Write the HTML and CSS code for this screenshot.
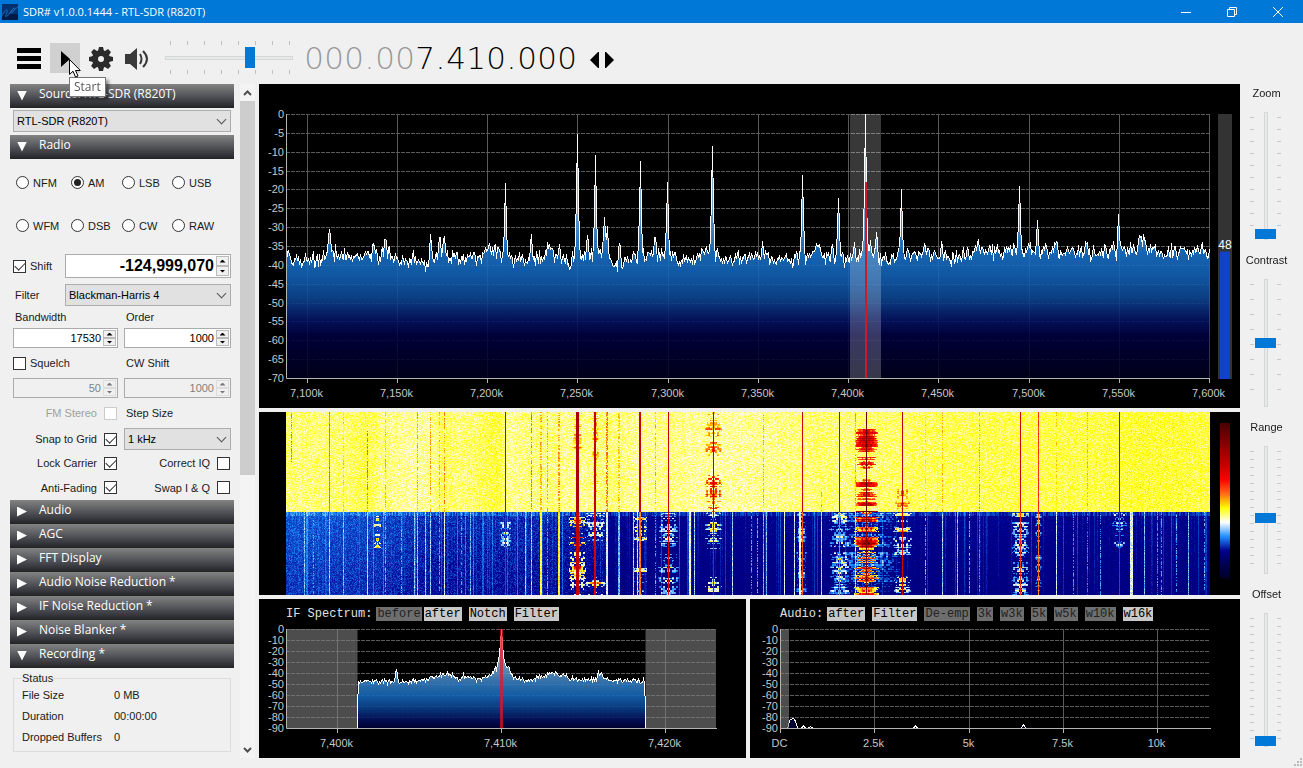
FILE: index.html
```
<!DOCTYPE html>
<html lang="en">
<head>
    <meta charset="UTF-8">
    <meta name="viewport" content="width=device-width, initial-scale=1.0">
    <title>SDR# v1.0.0.1444 - RTL-SDR (R820T)</title>
    <link rel="stylesheet" href="styles.css">
</head>
<body>
    <header class="titlebar">
        <svg class="app-icon" viewBox="0 0 16 16">
            <rect width="16" height="16" fill="#04306e"/>
            <rect y="10" width="16" height="6" fill="#021a48"/>
            <path d="M0,12 C3,5 6,4 5,8 S2,13 5,12 S9,5 12,4 S11,9 9,9 S12,6 16,3" fill="none" stroke="#1c6cb8"/>
        </svg>
        <h1>SDR# v1.0.0.1444 - RTL-SDR (R820T)</h1>
        <div class="window-buttons">
            <button aria-label="Minimize"><svg viewBox="0 0 12 12"><path d="M1,6.5 H11"/></svg></button>
            <button aria-label="Restore"><svg viewBox="0 0 12 12"><path d="M1.5,3.5 H8.5 V10.5 H1.5 Z M3.5,3.5 V1.5 H10.5 V8.5 H8.5"/></svg></button>
            <button aria-label="Close"><svg viewBox="0 0 12 12"><path d="M1,1 L11,11 M11,1 L1,11"/></svg></button>
        </div>
    </header>

    <div class="toolbar">
        <button class="tool" aria-label="Menu">
            <svg viewBox="0 0 30 30"><path d="M3,5 h24 v5 h-24 z M3,13 h24 v5 h-24 z M3,21 h24 v5 h-24 z" fill="#000"/></svg>
        </button>
        <div class="play-wrap">
            <button class="tool active" aria-label="Start">
                <svg viewBox="0 0 30 30"><path d="M11,8 L20,16 L11,24 Z" fill="#000"/></svg>
            </button>
            <svg class="cursor" viewBox="0 0 12 19"><path d="M0.5,0.5 V15.5 L4,12.2 L6.5,18 L9,17 L6.5,11.5 H11.3 Z" fill="#fff" stroke="#000"/></svg>
            <span class="tooltip" role="tooltip">Start</span>
        </div>
        <button class="tool" aria-label="Configure">
            <svg viewBox="0 0 30 30">
                <g fill="#2b2b2b">
                    <circle cx="15" cy="16" r="9"/>
                    <path d="M12,8 L13,4 H17 L18,8 V24 L17,28 H13 L12,24 Z"/>
                    <path d="M12,8 L13,4 H17 L18,8 V24 L17,28 H13 L12,24 Z" transform="rotate(45 15 16)"/>
                    <path d="M12,8 L13,4 H17 L18,8 V24 L17,28 H13 L12,24 Z" transform="rotate(90 15 16)"/>
                    <path d="M12,8 L13,4 H17 L18,8 V24 L17,28 H13 L12,24 Z" transform="rotate(135 15 16)"/>
                </g>
                <circle cx="15" cy="16" r="3" fill="#f0f0f0"/>
            </svg>
        </button>
        <button class="tool" aria-label="Mute">
            <svg viewBox="0 0 30 30">
                <path d="M3,11 H8 L15,5 V27 L8,21 H3 Z" fill="#3a3a3a"/>
                <path d="M18,11 Q21,16 18,21 M21,8 Q29,16 21,24" fill="none" stroke="#3a3a3a" stroke-width="2"/>
            </svg>
        </button>
        <div class="slider-h">
            <input type="range" min="0" max="100" value="68" aria-label="Volume">
        </div>
        <div class="frequency" aria-label="Frequency">
            <span class="off">0</span><span class="off">0</span><span class="off">0</span><i class="off">.</i><span class="off">0</span><span class="off">0</span><span>7</span><i>.</i><span>4</span><span>1</span><span>0</span><i>.</i><span>0</span><span>0</span><span>0</span>
        </div>
        <button class="tune" aria-label="Tuning style">
            <svg viewBox="0 0 24 16"><path d="M0,8 L8,0 H9 V16 H8 Z M24,8 L16,0 H15 V16 H16 Z" fill="#000"/></svg>
        </button>
    </div>

    <main>
        <aside class="sidebar">
            <div class="panels">
                <section>
                    <h2 class="open">Source: RTL-SDR (R820T)</h2>
                    <div class="source">
                        <div class="select"><select aria-label="Source"><option>RTL-SDR (R820T)</option></select></div>
                    </div>
                </section>
                <section>
                    <h2 class="open">Radio</h2>
                    <form class="radio">
                        <div class="modes">
                            <label><input type="radio" name="mode">NFM</label>
                            <label><input type="radio" name="mode" checked>AM</label>
                            <label><input type="radio" name="mode">LSB</label>
                            <label><input type="radio" name="mode">USB</label>
                            <label><input type="radio" name="mode">WFM</label>
                            <label><input type="radio" name="mode">DSB</label>
                            <label><input type="radio" name="mode">CW</label>
                            <label><input type="radio" name="mode">RAW</label>
                        </div>
                        <div class="pair shift">
                            <label><input type="checkbox" checked>Shift</label>
                            <div class="spin big">
                                <input type="text" value="-124,999,070" aria-label="Shift frequency">
                                <button type="button" aria-label="Up"></button><button type="button" aria-label="Down"></button>
                            </div>
                        </div>
                        <div class="pair filter">
                            <label class="inset" for="filter">Filter</label>
                            <div class="select"><select id="filter"><option>Blackman-Harris 4</option></select></div>
                        </div>
                        <div class="settings">
                            <label class="inset" for="bandwidth">Bandwidth</label>
                            <label class="inset" for="order">Order</label>
                            <div class="spin">
                                <input type="text" id="bandwidth" value="17530">
                                <button type="button" aria-label="Up"></button><button type="button" aria-label="Down"></button>
                            </div>
                            <div class="spin">
                                <input type="text" id="order" value="1000">
                                <button type="button" aria-label="Up"></button><button type="button" aria-label="Down"></button>
                            </div>
                            <label><input type="checkbox">Squelch</label>
                            <label class="inset" for="cwshift">CW Shift</label>
                            <div class="spin disabled">
                                <input type="text" value="50" aria-label="Squelch level" disabled>
                                <button type="button" aria-label="Up" disabled></button><button type="button" aria-label="Down" disabled></button>
                            </div>
                            <div class="spin disabled">
                                <input type="text" id="cwshift" value="1000" disabled>
                                <button type="button" aria-label="Up" disabled></button><button type="button" aria-label="Down" disabled></button>
                            </div>
                            <label class="right disabled">FM Stereo<input type="checkbox" disabled></label>
                            <label class="inset" for="step">Step Size</label>
                            <label class="right">Snap to Grid<input type="checkbox" checked></label>
                            <div class="select"><select id="step"><option>1 kHz</option></select></div>
                            <label class="right">Lock Carrier<input type="checkbox" checked></label>
                            <label class="right">Correct IQ<input type="checkbox"></label>
                            <label class="right">Anti-Fading<input type="checkbox" checked></label>
                            <label class="right">Swap I &amp; Q<input type="checkbox"></label>
                        </div>
                    </form>
                </section>
                <h2>Audio</h2>
                <h2>AGC</h2>
                <h2>FFT Display</h2>
                <h2>Audio Noise Reduction *</h2>
                <h2>IF Noise Reduction *</h2>
                <h2>Noise Blanker *</h2>
                <section>
                    <h2 class="open">Recording *</h2>
                    <fieldset>
                        <legend>Status</legend>
                        <dl>
                            <dt>File Size</dt><dd>0 MB</dd>
                            <dt>Duration</dt><dd>00:00:00</dd>
                            <dt>Dropped Buffers</dt><dd>0</dd>
                        </dl>
                    </fieldset>
                </section>
            </div>
            <div class="scrollbar">
                <svg viewBox="0 0 15 17"><path d="M4,11 L7.5,7.5 L11,11"/></svg>
                <div class="thumb"></div>
                <svg viewBox="0 0 15 17"><path d="M4,7 L7.5,10.5 L11,7"/></svg>
            </div>
        </aside>

        <div class="displays">
            <div class="display"><svg class="chart" id="spectrum"></svg></div>
            <div class="display waterfall">
                <canvas id="waterfall"></canvas>
                <div class="colorbar"></div>
            </div>
            <div class="bottom">
                <div class="display">
                    <div class="chips if-chips">
                        <span>IF Spectrum:</span>
                        <button class="dim">before</button><button>after</button><button>Notch</button><button>Filter</button>
                    </div>
                    <svg class="chart" id="ifspectrum"></svg>
                </div>
                <div class="display">
                    <div class="chips audio-chips">
                        <span>Audio:</span>
                        <button>after</button><button>Filter</button><button class="dim">De-emp</button><button class="dim">3k</button><button class="dim">w3k</button><button class="dim">5k</button><button class="dim">w5k</button><button class="dim">w10k</button><button>w16k</button>
                    </div>
                    <svg class="chart" id="audiospectrum"></svg>
                </div>
            </div>
        </div>

        <div class="sliders">
            <label for="zoom">Zoom</label>
            <div class="slider-v gap-12"><input type="range" id="zoom" min="0" max="100" value="0"></div>
            <label for="contrast">Contrast</label>
            <div class="slider-v gap-15"><input type="range" id="contrast" min="0" max="100" value="50"></div>
            <label for="range">Range</label>
            <div class="slider-v gap-8"><input type="range" id="range" min="0" max="100" value="43"></div>
            <label for="offset">Offset</label>
            <div class="slider-v gap-8"><input type="range" id="offset" min="0" max="100" value="0"></div>
        </div>
    </main>
    <footer><svg class="grip" viewBox="0 0 9 9"><path d="M6,0h2v2h-2z M3,3h2v2h-2z M6,3h2v2h-2z M0,6h2v2h-2z M3,6h2v2h-2z M6,6h2v2h-2z" fill="#bbb"/></svg></footer>

    <script src="script.js"></script>
</body>
</html>
```
FILE: styles.css
```
* {
    box-sizing: border-box;
}

body {
    margin: 0;
    height: 100vh;
    display: flex;
    flex-direction: column;
    background: #f0f0f0;
    color: #1a1a1a;
    font: 11px/14px "Liberation Sans", Arial, sans-serif;
    overflow: hidden;
}

button {
    margin: 0;
    padding: 0;
    border: 0;
    background: none;
    font: inherit;
    color: inherit;
}

/* Title bar */
.titlebar {
    height: 23px;
    flex: none;
    display: flex;
    align-items: center;
    background: #0078d7;
    color: #fff;
    padding-left: 2px;
}

.app-icon {
    width: 16px;
    height: 16px;
    margin-right: 5px;
}

.titlebar h1 {
    margin: 0;
    font: 11px/20px "Open Sans", "Noto Sans", sans-serif;
}

.window-buttons {
    margin-left: auto;
    display: flex;
}

.window-buttons button {
    width: 46px;
    height: 20px;
    display: grid;
    place-items: center;
}

.window-buttons svg {
    width: 12px;
    height: 12px;
    fill: none;
    stroke: #fff;
}

.window-buttons button:last-child {
    margin-right: 2px;
}

/* Toolbar */
.toolbar {
    height: 61px;
    flex: none;
    display: flex;
    align-items: center;
    padding: 8px 0 0 14px;
}

.tool {
    width: 30px;
    height: 30px;
    margin-right: 6px;
    flex: none;
}

.tool svg {
    display: block;
}

.tool.active {
    background: #d0d0d0;
}

.play-wrap {
    position: relative;
    display: flex;
}

.cursor {
    position: absolute;
    left: 19px;
    top: 16px;
    width: 12px;
    height: 19px;
    z-index: 3;
}

.tooltip {
    position: absolute;
    left: 19px;
    top: 34px;
    z-index: 2;
    padding: 0 4px;
    background: #fff;
    border: 1px solid #767676;
    box-shadow: 3px 3px 3px rgba(0, 0, 0, 0.4);
    color: #575757;
    font: 12px/18px "Open Sans", "Noto Sans", sans-serif;
}

/* Frequency readout */
.frequency {
    display: flex;
    margin-left: 11px;
    font: 200 31px/30px "DejaVu Sans", sans-serif;
    color: #000;
}

.frequency span {
    width: 20px;
    text-align: center;
}

.frequency i {
    width: 11px;
    font-style: normal;
    text-align: center;
}

.frequency .off {
    color: #989898;
}

.tune {
    width: 24px;
    height: 16px;
    margin: 4px 0 0 13px;
}

.tune svg {
    display: block;
}

/* Sliders */
input[type="range"] {
    appearance: none;
    margin: 0;
    background: none;
}

.slider-h {
    width: 128px;
    height: 33px;
    margin-left: 7px;
    display: flex;
    flex-direction: column;
    justify-content: space-between;
}

.slider-h::before,
.slider-h::after {
    content: "";
    height: 4px;
    margin: 0 2px 0 5px;
    background: repeating-linear-gradient(90deg, #c0c0c0 0 1px, transparent 1px 17px);
}

.slider-h input {
    width: 100%;
    height: 21px;
}

.slider-h input::-webkit-slider-runnable-track {
    height: 4px;
    background: #e7eaea;
    border: 1px solid #d6d6d6;
}

.slider-h input::-webkit-slider-thumb {
    appearance: none;
    width: 10px;
    height: 21px;
    margin-top: -10px;
    background: #0078d7;
}

.sliders {
    width: 63px;
    padding-right: 12px;
    display: flex;
    flex-direction: column;
    align-items: center;
}

.sliders label {
    height: 18px;
    margin-bottom: 10px;
    padding-left: 2px;
    line-height: 18px;
}

.slider-v {
    width: 31px;
    height: 128px;
    margin-bottom: 11px;
    display: flex;
    justify-content: space-between;
}

.slider-v:last-child {
    height: 134px;
}

.slider-v::before,
.slider-v::after {
    content: "";
    width: 4px;
    margin: 5px 0;
    background: repeating-linear-gradient(#c8c8c8 0 1px, transparent 1px var(--gap));
}

.gap-8 {
    --gap: 8px;
}

.gap-12 {
    --gap: 12px;
}

.gap-15 {
    --gap: 15px;
}

.slider-v input {
    width: 21px;
    height: 100%;
    writing-mode: vertical-lr;
    direction: rtl;
}

.slider-v input::-webkit-slider-runnable-track {
    width: 4px;
    background: #e7eaea;
    border: 1px solid #d6d6d6;
}

.slider-v input::-webkit-slider-thumb {
    appearance: none;
    width: 21px;
    height: 10px;
    margin-left: -10px;
    background: #0078d7;
}

/* Main area */
main {
    flex: 1;
    min-height: 0;
    display: flex;
}

footer {
    height: 10px;
    flex: none;
    display: flex;
    justify-content: flex-end;
}

.grip {
    width: 9px;
    height: 9px;
}

.sidebar {
    width: 259px;
    flex: none;
    padding: 0 4px 0 10px;
    display: flex;
    justify-content: space-between;
}

.panels {
    width: 224px;
}

.panels h2 {
    margin: 0;
    height: 24px;
    display: flex;
    align-items: center;
    padding: 0 0 4px 6px;
    background: linear-gradient(#838383, #5c5d61 40%, #2b2d33 90%, #222);
    color: #fff;
    font: 12px/18px "Open Sans", "Noto Sans", sans-serif;
}

.panels h2::before {
    content: "";
    width: 10px;
    height: 10px;
    margin: 3px 12px 0 1px;
    background: #fff;
    clip-path: polygon(0 0, 100% 50%, 0 100%);
}

.panels h2.open::before {
    clip-path: polygon(0 0, 100% 0, 50% 100%);
}

.source {
    padding: 2px 3px 3px;
}

/* Form controls */
.select {
    display: grid;
    align-items: center;
}

.select::after {
    content: "";
    grid-area: 1 / 1;
    justify-self: end;
    width: 6px;
    height: 6px;
    margin: -4px 6px 0 0;
    border: solid #555;
    border-width: 0 1px 1px 0;
    transform: rotate(45deg);
    pointer-events: none;
}

select {
    appearance: none;
    grid-area: 1 / 1;
    width: 100%;
    height: 22px;
    padding: 0 3px;
    border: 1px solid #adadad;
    border-radius: 0;
    background: #e1e1e1;
    color: #000;
    font: inherit;
}

.spin {
    display: grid;
    grid-template-columns: 1fr 13px;
    grid-template-rows: 1fr 1fr;
    padding: 1px;
    background: #fff;
    border: 1px solid #ababab;
}

.spin input {
    grid-row: 1 / 3;
    width: 100%;
    min-width: 0;
    padding: 0 2px 0 0;
    border: 0;
    background: none;
    color: #000;
    font: inherit;
    text-align: right;
}

.spin.big input {
    font-size: 16px;
    font-weight: bold;
}

.spin button {
    display: grid;
    place-items: center;
    min-height: 0;
    background: #f0f0f0;
    border: 1px solid #bbb;
}

.spin button::before {
    content: "";
    width: 6px;
    height: 3px;
    background: #000;
    clip-path: polygon(50% 0, 100% 100%, 0 100%);
}

.spin button:last-child::before {
    clip-path: polygon(0 0, 100% 0, 50% 100%);
}

.spin.disabled {
    background: #f0f0f0;
}

.spin.disabled input {
    color: #808080;
}

.spin.disabled button {
    border-color: #ddd;
}

.spin.disabled button::before {
    background: #777;
}

input[type="radio"],
input[type="checkbox"] {
    appearance: none;
    flex: none;
    width: 13px;
    height: 13px;
    margin: 0;
    display: grid;
    place-items: center;
    background: #fff;
    border: 1px solid #333;
}

input[type="radio"] {
    border-radius: 50%;
}

input[type="radio"]:checked::before {
    content: "";
    width: 7px;
    height: 7px;
    border-radius: 50%;
    background: #222;
}

input[type="checkbox"]:checked::before {
    content: "";
    width: 9px;
    height: 5px;
    margin-top: -3px;
    border: solid #333;
    border-width: 0 0 1px 1px;
    transform: rotate(-45deg);
}

input[type="checkbox"]:disabled {
    border-color: #ccc;
}

.radio {
    padding: 2px 3px 1px;
}

.radio label {
    display: flex;
    align-items: center;
    gap: 4px;
}

.radio label.inset {
    padding-left: 2px;
}

.radio label.right {
    justify-content: flex-end;
    gap: 7px;
    padding-right: 1px;
}

.radio label.disabled {
    color: #a0a0a0;
}

.modes {
    display: grid;
    grid-template-columns: 55px 51px 50px 1fr;
    grid-auto-rows: 43px;
    padding-left: 3px;
}

.pair {
    display: grid;
    grid-template-columns: 52px 1fr;
}

.shift {
    height: 24px;
    margin: 7px 0 6px;
}

.filter {
    height: 21px;
}

.settings {
    display: grid;
    grid-template-columns: 105px 1fr;
    grid-template-rows: 23px 20px 30px 20px 30px 22px 26px 23px;
    column-gap: 6px;
}

fieldset {
    margin: 3px 3px 0;
    padding: 0 8px 3px;
    border: 1px solid #dcdcdc;
}

legend {
    padding: 0;
}

dl {
    margin: 0;
    display: grid;
    grid-template-columns: 92px 1fr;
    line-height: 21px;
}

dd {
    margin: 0;
}

.scrollbar {
    width: 15px;
    display: flex;
    flex-direction: column;
    background: #f4f4f4;
}

.scrollbar svg {
    height: 17px;
    fill: none;
    stroke: #505050;
    stroke-width: 2;
}

.scrollbar svg:last-child {
    margin-top: auto;
}

.scrollbar .thumb {
    height: 374px;
    background: #cdcdcd;
}

/* Displays */
.displays {
    flex: 1;
    min-width: 0;
    display: grid;
    grid-template-rows: 324fr 183fr 159fr;
    gap: 4px;
}

.display {
    min-width: 0;
    min-height: 0;
    display: flex;
    flex-direction: column;
    background: #000;
    overflow: hidden;
}

.bottom {
    min-height: 0;
    display: grid;
    grid-template-columns: 487fr 490fr;
    gap: 4px;
}

.chart {
    flex: 1;
    width: 100%;
    min-height: 0;
    display: block;
}

.chart text {
    fill: #c8c8c8;
    font: 11px "Liberation Sans", Arial, sans-serif;
}

.chart .middle {
    text-anchor: middle;
}

.chart .end {
    text-anchor: end;
}

.chart .meter {
    fill: #fff;
    font-size: 12px;
}

.grid-h {
    stroke: #5a5a5a;
    stroke-dasharray: 4 1;
}

.grid-v {
    stroke: #5a5a5a;
}

.axis {
    fill: none;
    stroke: #b4b4b4;
}

.trace {
    fill: none;
    stroke: #fff;
}

.waterfall {
    flex-direction: row;
    padding-left: 27px;
}

.waterfall canvas {
    flex: 1;
    min-width: 0;
    height: 100%;
}

.colorbar {
    width: 10px;
    margin: 11px 10px 16px;
    background: linear-gradient(#4a0000, #750000, #9f0000, #c60000, #ff0000, #fe6d16, #ffff00, #fff, #1e90ff, #000091, #000050, #000020);
}

.chips {
    height: 24px;
    flex: none;
    padding-top: 8px;
    display: flex;
    gap: 7px;
    color: #e0e0e0;
    font: 12px/14px "Liberation Mono", monospace;
}

.chips span {
    margin-right: -3px;
}

.chips button {
    height: 14px;
    padding: 0 1px;
    background: #c8c8c8;
    color: #000;
}

.chips .dim {
    background: #6e6e6e;
    color: #222;
}

.if-chips {
    padding-left: 27px;
}

.if-chips .dim {
    margin-right: -5px;
}

.audio-chips {
    padding-left: 30px;
}
```
FILE: script.js
```
const NS = 'http://www.w3.org/2000/svg';

// Repeatable noise in 0..1
function hash(a, b = 0) {
    let n = Math.imul(a + 1013, 374761393) ^ Math.imul(b + 7, 668265263);
    n = Math.imul(n ^ (n >>> 13), 1274126177);
    return ((n ^ (n >>> 16)) >>> 0) / 4294967296;
}

// Linear interpolation through [x, y] points
function curve(points, x) {
    if (x <= points[0][0]) return points[0][1];
    for (let i = 1; i < points.length; i++) {
        const [x0, y0] = points[i - 1];
        const [x1, y1] = points[i];
        if (x <= x1) return y0 + (y1 - y0) * (x - x0) / (x1 - x0);
    }
    return points[points.length - 1][1];
}

function add(parent, name, attrs, text) {
    const el = document.createElementNS(NS, name);
    for (const key in attrs) el.setAttribute(key, attrs[key]);
    if (text !== undefined) el.textContent = text;
    parent.appendChild(el);
    return el;
}

const spectrum = {
    min: 7088.6, max: 7600, low: -70, step: 5, top: 30, left: 27, right: 31, noise: 2.8,
    ticks: [7100, 7150, 7200, 7250, 7300, 7350, 7400, 7450, 7500, 7550, 7600],
    label: v => v.toLocaleString('en-US') + 'k',
    stops: [[0, '#dcebfa'], [0.35, '#7fb4e6'], [0.52, '#1a74cc'], [0.62, '#1260b4'], [0.7, '#0d4592'], [0.78, '#051464'], [0.84, '#000040'], [1, '#00001c']],
    base: [[7088, -38.5], [7107, -38.5], [7112, -36], [7118, -38], [7141, -38], [7144, -36], [7148, -38.5], [7166, -39.5], [7170, -38],
        [7174, -36.5], [7180, -38], [7195, -38.5], [7200, -36], [7206, -36.2], [7211, -39], [7230, -38], [7233, -36], [7238, -38], [7244, -39], [7248, -38],
        [7262, -37], [7266, -35.5], [7270, -39.5], [7290, -37.5], [7298, -37], [7304, -38.5], [7315, -38.5], [7322, -35], [7328, -38], [7340, -39],
        [7352, -37], [7360, -39], [7376, -38.5], [7382, -36], [7390, -38], [7400, -39], [7410, -37], [7420, -38.5], [7444, -37], [7455, -38.5], [7470, -36.5],
        [7500, -36.2], [7515, -36.8], [7530, -37], [7555, -35.8], [7562, -34.8], [7570, -36.5], [7595, -36], [7600, -37]],
    peaks: [[7112.6, -30.5], [7137, -34.4], [7143.6, -33.2], [7168.6, -31.8], [7173.5, -32.7], [7176.3, -32.5], [7209.7, -18.4], [7224.5, -31.8],
        [7233.3, -34], [7240, -34.5], [7250, -5.3], [7255.5, -32.1], [7259.7, -10.9], [7265, -27.4], [7266.2, -29.8], [7272.9, -34.2], [7284.8, -12.5],
        [7292.8, -32.8], [7299.8, -18], [7324.7, -8.5], [7352.6, -33.7], [7374.4, -16.1], [7382.6, -35], [7391, -34.8], [7394.6, -22.2], [7403.3, -33.9],
        [7409.6, 0], [7412.3, -33.3], [7415.6, -31.3], [7429.4, -19.9], [7442, -34.2], [7451.6, -33.7], [7472, -33.3], [7494.9, -19], [7504.8, -28],
        [7515, -34], [7532, -34.3], [7549.8, -26.5], [7561.8, -32.8], [7563.8, -33.3]]
};

const ifSpectrum = {
    min: 7396.9, max: 7423.1, low: -90, step: 10, top: 6, left: 27, right: 30, noise: 2.8,
    ticks: [7400, 7410, 7420],
    label: v => v.toLocaleString('en-US') + 'k',
    stops: [[0, '#d8d8e8'], [0.4, '#6c9cc8'], [0.55, '#347cc0'], [0.68, '#1466b8'], [0.82, '#0a3a86'], [0.92, '#02105c'], [1, '#000038']],
    clip: [7401.2, 7418.8],
    base: [[7401, -48], [7404.8, -48], [7406, -43], [7406.8, -40], [7407.3, -46], [7407.8, -43.5], [7408.5, -46], [7409.3, -43], [7409.7, -35],
        [7410, -22], [7410.3, -35], [7410.6, -42], [7411, -46], [7411.8, -46.5], [7412.3, -43], [7413.2, -41], [7413.8, -42], [7414.5, -46.5], [7416, -45.5], [7418.6, -47.5]],
    peaks: [[7403.6, -36], [7407.7, -41], [7409.9, -25], [7410, 0], [7410.4, -34], [7413.3, -38.5], [7415.9, -39], [7416.1, -40]]
};

const audioSpectrum = {
    min: 0, max: 11.4, low: -90, step: 10, top: 6, left: 30, right: 30, noise: 0,
    ticks: [0, 2.5, 5, 7.5, 10],
    label: v => v ? v + 'k' : 'DC',
    stops: [[0, '#fff'], [0.85, '#000050'], [1, '#000030']],
    base: [[0, -90], [0.2, -90], [0.24, -83], [0.34, -81], [0.4, -84], [0.45, -90]],
    peaks: [[0.6, -88], [0.8, -89], [3.57, -88], [6.45, -87]]
};

function drawChart(id, opt) {
    const svg = document.getElementById(id);
    const w = svg.clientWidth;
    const h = svg.clientHeight;
    const x0 = opt.left;
    const x1 = w - opt.right;
    const y0 = opt.top;
    const y1 = h - 30;
    const px = v => Math.round(x0 + (v - opt.min) / (opt.max - opt.min) * (x1 - x0)) + 0.5;
    const py = db => y0 + db / opt.low * (y1 - y0);
    svg.replaceChildren();

    const defs = add(svg, 'defs', {});
    const grad = add(defs, 'linearGradient', { id: id + '-fill', gradientUnits: 'userSpaceOnUse', x1: 0, x2: 0, y1: y0, y2: y1 });
    opt.stops.forEach(([offset, color]) => add(grad, 'stop', { offset, 'stop-color': color }));

    // Grid and labels
    for (let db = 0; db >= opt.low; db -= opt.step) {
        const y = Math.round(py(db)) + 0.5;
        if (db > opt.low) add(svg, 'line', { class: 'grid-h', x1: x0, x2: x1, y1: y, y2: y });
        add(svg, 'text', { class: 'end', x: x0 - 2, y: y + 3.5 }, db);
    }
    opt.ticks.forEach(v => {
        const x = px(v);
        if (v > opt.min) add(svg, 'line', { class: 'grid-v', x1: x, x2: x, y1: y0, y2: y1 });
        add(svg, 'line', { class: 'axis', x1: x, x2: x, y1: y1, y2: y1 + 5 });
        add(svg, 'text', { class: 'middle', x: x - 1, y: y1 + 19 }, opt.label(v));
    });

    // Trace, one point per pixel column
    const levels = [];
    for (let x = x0; x <= x1; x++) {
        const v = opt.min + (x - x0) / (x1 - x0) * (opt.max - opt.min);
        levels.push(curve(opt.base, v) + (hash(x) + hash(x, 5) - 1) * opt.noise);
    }
    opt.peaks.forEach(([v, db]) => {
        const i = Math.floor(px(v)) - x0;
        const rise = db - levels[i];
        levels[i] = db;
        [0.45, rise > 12 ? 0.1 : 0].forEach((k, d) => {
            for (const j of [i - d - 1, i + d + 1]) {
                if (j >= 0 && j < levels.length) levels[j] = Math.max(levels[j], levels[j] + rise * k);
            }
        });
    });
    let points = levels.map((db, i) => [x0 + i + 0.5, py(Math.min(0, Math.max(opt.low, db)))]);
    if (opt.clip) {
        const [a, b] = opt.clip.map(px);
        points = points.filter(p => p[0] > a && p[0] < b);
        points.unshift([a, y1], [a, py(-72)]);
        points.push([b, py(-72)], [b, y1]);
        for (const [s, e] of [[x0, a], [b, x1]]) {
            add(svg, 'rect', { x: s, y: y0, width: e - s, height: y1 - y0, fill: '#808080', opacity: 0.6 });
        }
    }
    const line = points.map(p => p[0] + ',' + p[1].toFixed(1)).join(' ');
    const start = points[0][0];
    const end = points[points.length - 1][0];
    add(svg, 'polygon', { points: `${start},${y1} ${line} ${end},${y1}`, fill: `url(#${id}-fill)`, opacity: 0.88 });
    add(svg, 'polyline', { class: 'trace', points: line, 'shape-rendering': 'crispEdges' });
    add(svg, 'path', { class: 'axis', d: `M${x0 + 0.5},${y0} V${y1 + 0.5} H${x1 + 1}` });

    // Tuned channel, filter and meter overlays
    if (id === 'spectrum') {
        const a = px(7401);
        const tuned = px(7409.6) - 0.5;
        const top = py(-18);
        add(svg, 'rect', { x: a - 0.5, y: y0, width: px(7418.3) - a, height: y1 - y0, fill: '#fff', opacity: 0.22 });
        add(svg, 'path', { d: `M${tuned},${top} h2 V${y1} h-2 Z`, fill: '#d01828' });
        add(svg, 'rect', { x: w - 22, y: y0, width: 14, height: y1 - y0 + 1, fill: '#333' });
        add(svg, 'rect', { x: w - 20, y: py(-36.5), width: 10, height: y1 - py(-36.5) + 1, fill: '#1242c8' });
        add(svg, 'text', { class: 'middle meter', x: w - 15, y: py(-36.5) - 3 }, '48');
    } else if (id === 'ifspectrum') {
        add(svg, 'rect', { x: px(7410) - 1.5, y: y0, width: 3, height: y1 - y0, fill: '#f01020', opacity: 0.7 });
    } else {
        add(svg, 'rect', { x: x0 + 1, y: y0, width: 8, height: y1 - y0, fill: '#808080', opacity: 0.6 });
    }
}

const palette = [[0, 0, 32], [0, 0, 48], [0, 0, 80], [0, 0, 145], [30, 144, 255], [255, 255, 255], [255, 255, 0],
    [254, 109, 22], [255, 0, 0], [198, 0, 0], [159, 0, 0], [117, 0, 0], [74, 0, 0]];

// Carriers: kHz, level above and below the contrast change, width in columns
const carriers = [
    [7091.5, 6.8, 0, 1, 0, 0.27], [7112.6, 7, 4.5, 1], [7120.3, 6.2, 4.3, 1], [7133.6, 6.9, 6.2, 1, 0.1], [7143.6, 6.4, 4.2, 1], [7161.3, 6.5, 4.4, 1],
    [7168.5, 6.6, 4.5, 1], [7173.5, 6.3, 4.1, 1], [7176.3, 6.8, 5, 1], [7209.7, 9.2, 8.2, 1], [7224.4, 6.9, 4.5, 1], [7229.6, 6.4, 5.8, 2], [7233.3, 6.5, 4.2, 1],
    [7239.9, 6.6, 6, 2], [7249.7, 9.6, 9.2, 3], [7259.7, 9, 8.8, 2], [7265.5, 6.8, 4.8, 1], [7266.2, 6.9, 5.6, 1], [7272.9, 6.3, 4.3, 2], [7284.8, 9, 7, 2],
    [7292.8, 6.4, 4, 1], [7299.8, 8.9, 8.6, 1], [7312.2, 0, 5, 2], [7314.5, 0, 4.6, 1], [7324.7, 9.4, 8.7, 1], [7335.3, 0, 4.6, 1], [7352.6, 6.4, 4.3, 1],
    [7364.5, 0, 5, 1], [7369.8, 0, 4.8, 1], [7373, 0, 5, 2], [7374.4, 8.7, 7.3, 1], [7384.7, 6.5, 6.3, 1, 0.42], [7394.6, 9, 7, 1], [7403.3, 6.5, 4.6, 1],
    [7409.6, 11.2, 10.8, 1], [7429.4, 9.1, 8.7, 1], [7442, 6.1, 4.2, 1], [7451.6, 6.4, 4.5, 1], [7460, 0, 4.4, 1], [7466.5, 0, 4.2, 1], [7472, 6.5, 4, 1],
    [7494.9, 8.8, 7.6, 1], [7504.8, 7.6, 7, 1], [7515, 6.2, 4.8, 1], [7524, 0, 4, 1], [7532, 6.3, 3.8, 1], [7539, 0, 4.1, 1], [7549.8, 8.9, 8.2, 1],
    [7556.3, 0, 4.9, 3], [7563.5, 0, 4.3, 1], [7570.5, 0, 4, 1], [7573, 0, 4, 1], [7581, 0, 4.2, 1], [7588, 0, 4.3, 1], [7596.5, 0, 4.2, 1],
    [7098.7, 0, 4.4, 1], [7103.7, 0, 4.1, 1], [7152, 0, 4.2, 1], [7159.6, 0, 4.5, 1], [7165.5, 0, 4.5, 1], [7185.3, 0, 4.1, 1], [7190.3, 0, 4.3, 1],
    [7220.7, 0, 4.4, 1], [7280.5, 0, 4.5, 1], [7282.7, 0, 4.8, 1], [7346, 0, 4.1, 1], [7349.5, 0, 4.2, 1], [7354.5, 0, 4.4, 1]
];

// Speech sidebands: kHz, half width, start and end row (0..1), strength
const bursts = [
    [7409.6, 6.5, 0.09, 0.31, 4.8], [7409.6, 6.5, 0.36, 0.51, 4.5], [7409.6, 7.5, 0.54, 1, 8.5],
    [7409.6, 20, 0.55, 1, 1.7],
    [7249.7, 5, 0.55, 1, 5.2], [7249.7, 3, 0, 0.2, 2], [7259.7, 6, 0.55, 0.7, 3.6], [7259.7, 6, 0.9, 1, 4.5], [7259.7, 2, 0, 0.5, 2],
    [7324.7, 5, 0, 0.26, 2.6], [7324.7, 5, 0.34, 0.53, 3.6], [7324.7, 5, 0.54, 0.75, 3.6], [7324.7, 5, 0.9, 1, 5],
    [7299.8, 6, 0.55, 1, 3.2], [7284.8, 4, 0.55, 0.7, 4.3], [7284.8, 4, 0.85, 1, 3.7], [7139, 2, 0.55, 0.74, 4.8],
    [7209.7, 3, 0.6, 0.76, 2.6], [7394.6, 6, 0.55, 1, 2.8], [7373.5, 3, 0.55, 1, 2.2],
    [7429.4, 5, 0.42, 0.53, 2.2], [7429.4, 6, 0.55, 0.78, 4], [7429.4, 5, 0.88, 1, 4.4],
    [7494.9, 5, 0.55, 1, 3.2], [7504.8, 2, 0.55, 1, 2.2], [7549.8, 5, 0.55, 0.74, 2.8]
];

function drawWaterfall() {
    const canvas = document.getElementById('waterfall');
    const w = canvas.width = canvas.clientWidth;
    const h = canvas.height = canvas.clientHeight;
    const ctx = canvas.getContext('2d');
    const image = ctx.createImageData(w, h);
    const split = Math.round(h * 0.546);
    const scale = w / (spectrum.max - spectrum.min);
    const col = f => Math.round((f - spectrum.min) * scale);

    const upper = [[0, 5.5], [60, 5.55], [80, 5.72], [95, 5.5], [120, 5.4], [145, 5.38], [155, 5.62], [175, 5.48], [210, 5.78], [225, 5.42], [255, 5.52], [290, 5.42],
        [325, 5.52], [360, 5.38], [380, 5.48], [425, 5.36], [470, 5.4], [530, 5.55], [570, 5.55], [700, 5.68], [800, 5.7], [855, 5.8], [924, 5.74]];
    const lower = [[0, 3.4], [70, 3.34], [110, 3.24], [150, 3.08], [250, 3.08], [300, 2.95], [330, 2.85], [924, 2.85]];

    for (let y = 0; y < h; y++) {
        const top = y < split;
        for (let x = 0; x < w; x++) {
            const ux = x / w * 924;
            const n = hash(x, y) + hash(x, y + 999) - 1;
            let v;
            if (top) {
                v = curve(upper, ux) + n * 0.5 + (hash(x, 77777) - 0.5) * 0.08;
            } else {
                const fade = 1 - 0.08 * (y - split) / (h - split);
                v = curve(lower, ux) * fade + Math.abs(n) * (ux < 320 ? 0.7 : 0.35) + Math.pow(hash(x, 88888), 10) * 0.7;
                if (y < split + 4) v += hash(x, 4242) * 0.6;
            }

            bursts.forEach(([f, half, r0, r1, gain], b) => {
                if (y < r0 * h || y > r1 * h) return;
                const d = Math.abs(x - col(f));
                const reach = half * scale;
                if (d > reach) return;
                // sidebands mirror around the carrier and come in short syllables
                const syllable = hash(Math.floor(y / 5), b + 50) * 0.6 + hash(y, b + 80) * 0.4;
                const grain = hash(Math.floor(d / 2) * 31 + Math.floor(y / 2), b + 300);
                const shape = Math.pow(1 - d / reach, 0.4);
                const s = syllable * (half === 6.5 || half === 7.5 ? 0.75 + grain * 0.45 : grain * 1.4) * shape;
                if (s > 0.3) v += gain * s;
            });
            setPixel(image.data, (y * w + x) * 4, v);
        }
        carriers.forEach(([f, hi, lo, width, from = 0, to = 1], c) => {
            const level = top ? hi : lo;
            if (!level || (top && (y < from * h || y > to * h))) return;
            const faint = level < (top ? 7 : 4.3);
            if (faint && hash(c, y) < 0.35) return;
            const start = col(f) - Math.floor(width / 2);
            for (let x = Math.max(0, start); x < Math.min(w, start + width); x++) {
                const jitter = (hash(x, y + 5000) - 0.5) * 0.9;
                setPixel(image.data, (y * w + x) * 4, level + jitter);
            }
        });
    }
    ctx.putImageData(image, 0, 0);
}

function setPixel(data, i, v) {
    v = Math.max(0, Math.min(11.99, v));
    const k = Math.floor(v);
    const t = v - k;
    for (let c = 0; c < 3; c++) data[i + c] = palette[k][c] + (palette[k + 1][c] - palette[k][c]) * t;
    data[i + 3] = 255;
}

function draw() {
    drawChart('spectrum', spectrum);
    drawChart('ifspectrum', ifSpectrum);
    drawChart('audiospectrum', audioSpectrum);
    drawWaterfall();
}

draw();
window.addEventListener('resize', draw);
```
